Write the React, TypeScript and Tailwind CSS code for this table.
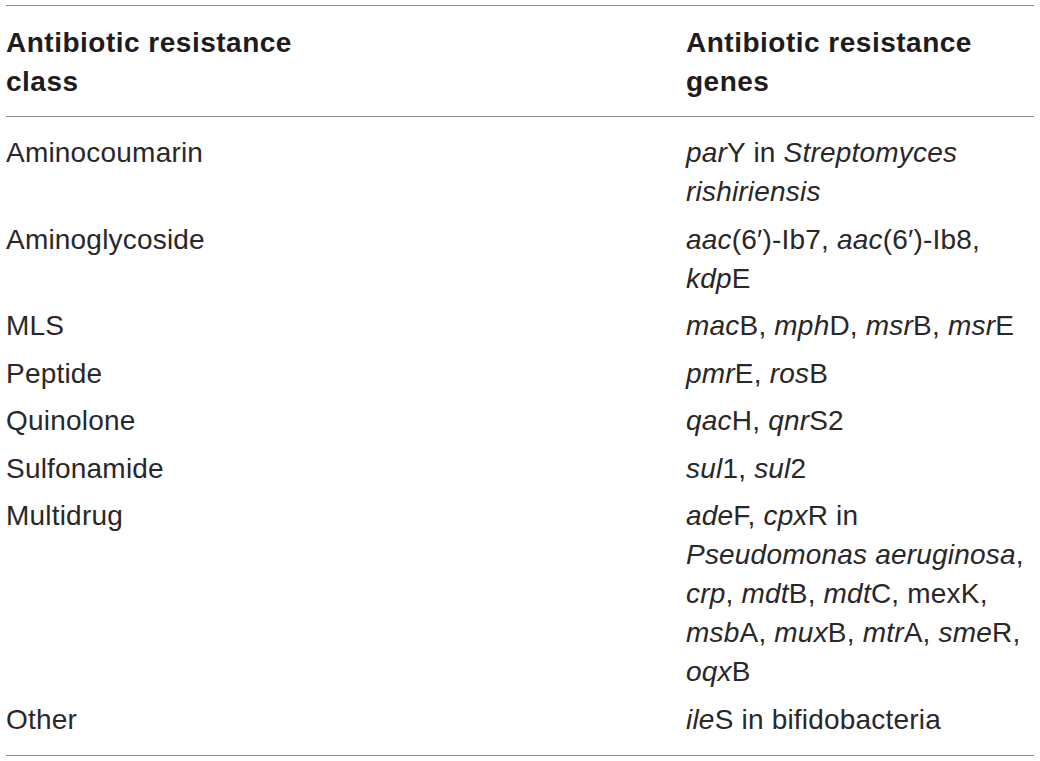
import type { ReactNode } from 'react'

type Row = { cls: string; genes: ReactNode }

const rows: Row[] = [
  {
    cls: 'Aminocoumarin',
    genes: (
      <>
        <i>par</i>Y in <i>Streptomyces</i>
        <br />
        <i>rishiriensis</i>
      </>
    ),
  },
  {
    cls: 'Aminoglycoside',
    genes: (
      <>
        <i>aac</i>(6′)-Ib7, <i>aac</i>(6′)-Ib8,
        <br />
        <i>kdp</i>E
      </>
    ),
  },
  {
    cls: 'MLS',
    genes: (
      <>
        <i>mac</i>B, <i>mph</i>D, <i>msr</i>B, <i>msr</i>E
      </>
    ),
  },
  {
    cls: 'Peptide',
    genes: (
      <>
        <i>pmr</i>E, <i>ros</i>B
      </>
    ),
  },
  {
    cls: 'Quinolone',
    genes: (
      <>
        <i>qac</i>H, <i>qnr</i>S2
      </>
    ),
  },
  {
    cls: 'Sulfonamide',
    genes: (
      <>
        <i>sul</i>1, <i>sul</i>2
      </>
    ),
  },
  {
    cls: 'Multidrug',
    genes: (
      <>
        <i>ade</i>F, <i>cpx</i>R in
        <br />
        <i>Pseudomonas aeruginosa</i>,
        <br />
        <i>crp</i>, <i>mdt</i>B, <i>mdt</i>C, mexK,
        <br />
        <i>msb</i>A, <i>mux</i>B, <i>mtr</i>A, <i>sme</i>R,
        <br />
        <i>oqx</i>B
      </>
    ),
  },
  {
    cls: 'Other',
    genes: (
      <>
        <i>ile</i>S in bifidobacteria
      </>
    ),
  },
]

export default function App() {
  return (
    <div className="w-[1040px] h-[761px] bg-white pt-[5px] px-[6px] font-['Liberation_Sans',Arial,sans-serif] text-[28px] leading-[39px] text-[#2a2728] tracking-[0.2px]">
      <div className="border-y border-[#8c8c8c]">
        {/* Header */}
        <div className="grid grid-cols-[680px_1fr] pt-[17px] pb-[15px] border-b border-[#8c8c8c] font-bold text-[#1f1c1d] tracking-[0.5px]">
          <div>
            Antibiotic resistance
            <br />
            class
          </div>
          <div>
            Antibiotic resistance
            <br />
            genes
          </div>
        </div>

        {/* Body */}
        <div className="pt-[12px] pb-[12px]">
          {rows.map((r) => (
            <div key={r.cls} className="grid grid-cols-[680px_1fr] py-[4.25px]">
              <div>{r.cls}</div>
              <div className="whitespace-nowrap">{r.genes}</div>
            </div>
          ))}
        </div>
      </div>
    </div>
  )
}
